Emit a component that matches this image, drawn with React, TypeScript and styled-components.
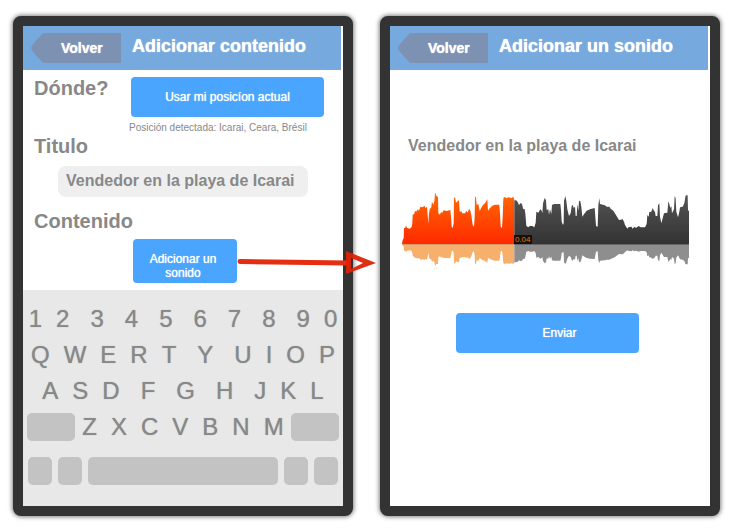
import React from "react";
import styled, { createGlobalStyle } from "styled-components";

const GlobalStyle = createGlobalStyle`
  *, *::before, *::after { box-sizing: border-box; }
  body { margin: 0; background: #fff; font-family: "Liberation Sans", Arial, sans-serif; color: #888; }
  button, input { font-family: inherit; margin: 0; border: 0; }
  button { cursor: pointer; padding: 0; }
  h1, h2, p { margin: 0; }
`;

const Board = styled.main`
  display: grid;
  grid-template-columns: 1fr 1fr;
  gap: 27px;
  padding: 16px 11px 13px 13px;
`;

const Phone = styled.section`
  display: flex;
  flex-direction: column;
  min-width: 0;
  border: 10px solid #333;
  border-radius: 8px;
  background: #333;
  box-shadow: 0 0 4px 1px rgba(0, 0, 0, 0.5);
`;

const Screen = styled.div`
  flex: 1;
  display: flex;
  flex-direction: column;
  background: #fff;
`;

const Header = styled.header`
  display: flex;
  align-items: flex-start;
  gap: 11px;
  height: 44px;
  margin-right: 2px;
  padding: 7px 8px;
  background: #76a9dd;
`;

const BackButton = styled.button`
  width: 90px;
  height: 30px;
  padding-left: 30px;
  text-align: left;
  background: #7d92b3;
  color: #fff;
  font-size: 14px;
  font-weight: bold;
  text-shadow: 0 0 1px #fff;
  clip-path: polygon(12px 0, 100% 0, 100% 100%, 12px 100%, 2px 19px, 0 50%, 2px 11px);
`;

const Title = styled.h1`
  padding-top: 1px;
  color: #fff;
  font-size: 18px;
  line-height: 24px;
  white-space: nowrap;
  text-shadow: 0 0 1px #fff;
`;

const Form = styled.form`
  flex: 1;
  display: flex;
  flex-direction: column;
  padding: 6px 19px 7px 11px;
`;

const LocationRow = styled.div`
  display: flex;
`;

const Heading = styled.h2`
  font-size: 20px;
  line-height: 24px;
`;

const LocationHeading = styled(Heading)`
  flex: 0 0 95px;
`;

const TitleLabel = styled.label`
  font-size: 20px;
  font-weight: bold;
  line-height: 24px;
`;

const LocationAction = styled.div`
  flex: 1;
  display: flex;
  flex-direction: column;
`;

const ActionButton = styled.button`
  min-height: 40px;
  border-radius: 4px;
  background: #49a5fe;
  color: #fff;
  font-size: 12px;
  line-height: 14px;
  text-shadow: 0 0 1px #fff;
`;

const LocateButton = styled(ActionButton)`
  margin: 1px 0 0 2px;
`;

const Note = styled.p`
  margin-top: 5px;
  font-size: 10px;
  line-height: 12px;
  white-space: nowrap;
`;

const TitleInput = styled.input`
  width: auto;
  min-width: 0;
  height: 31px;
  margin: 8px 16px 12px 24px;
  padding: 0 8px 2px;
  border-radius: 8px;
  background: #efefef;
  color: #888;
  font-size: 16px;
  font-weight: bold;
`;

const SoundSlot = styled.div`
  position: relative;
  align-self: center;
  width: 104px;
  margin: 6px 0 0 12px;
`;

const SoundButton = styled(ActionButton)`
  display: block;
  width: 100%;
  padding: 13px 14px 3px 10px;
`;

const FlowArrow = styled.svg`
  position: absolute;
  z-index: 1;
  top: 10px;
  left: 100%;
  pointer-events: none;
`;

const Keyboard = styled.div`
  display: flex;
  flex-direction: column;
  gap: 8px;
  padding: 15px 4px 21px;
  background: #e8e8e8;
`;

const KeyRow = styled.div`
  display: flex;
  justify-content: center;
  height: 28px;
`;

const BottomRow = styled(KeyRow)`
  gap: 6px;
  margin-top: 8px;
  padding: 0 1px;
`;

const LetterKey = styled.button<{ $wide: boolean }>`
  margin-left: ${(p) => (p.$wide ? 21 : 14)}px;
  background: none;
  color: #888;
  font-size: 24px;
  line-height: 28px;
  text-shadow: 0 0 1px #999;
  &:first-child { margin-left: 0; }
`;

const BlankKey = styled.button<{ $size: "key" | "shift" | "space" }>`
  flex: ${(p) => (p.$size === "space" ? "1" : p.$size === "shift" ? "0 0 48px" : "0 0 24px")};
  border-radius: 5px;
  background: #c3c3c3;
`;

const ShiftRow = styled(KeyRow)`
  justify-content: space-between;
`;

const LetterGroup = styled.div`
  display: flex;
`;

const SoundPanel = styled.div`
  flex: 1;
  display: flex;
  flex-direction: column;
  padding: 64px 21px 0 12px;
`;

const SoundTitle = styled.h2`
  padding-left: 6px;
  font-size: 16px;
  line-height: 24px;
`;

const Player = styled.div`
  position: relative;
  margin-top: 34px;
`;

const Wave = styled.svg`
  display: block;
  width: 100%;
  height: auto;
`;

const TimeTag = styled.span`
  position: absolute;
  left: 39%;
  top: 43px;
  padding: 0 1px;
  background: #15100c;
  color: #e8730c;
  font-size: 8px;
  line-height: 9px;
`;

const SendButton = styled(ActionButton)`
  margin: 46px 50px 0 54px;
  padding-left: 24px;
`;

/* Outline of the recording, as x,y pairs; the time axis is at y = 192. */
const AXIS = 192;
const SPLIT = 358;
const outline = [
  "21,192 23,180 26,175 27,145 31,143 33,136 36,144 44,146 50,141 52,130 53,105 58,101 60,92 64,95 68,88 72,92",
  "76,80 83,82 88,77 92,84 96,80 98,105 100,131 102,100 105,83 108,86 111,65 115,74 118,64 120,40 122,40 124,48",
  "129,50 130,100 135,104 138,95 141,100 146,91 155,93 166,90 168,110 170,140 173,144 176,130 177,52 180,53",
  "183,68 188,64 192,60 194,95 199,94 202,100 210,100 214,92 218,98 222,86 226,92 229,105 233,135 237,140",
  "239,110 240,50 243,52 245,75 250,72 254,93 258,85 264,75 270,70 277,58 279,92 285,84 292,77 300,74 313,74",
  "315,100 317,140 321,144 323,110 325,55 330,50 334,55 340,52 350,54 355,50 359,62 363,60 368,66 372,75",
  "378,68 382,75 384,86 389,88 391,100 394,138 400,142 404,138 412,138 418,142 422,128 424,95 430,98 436,88",
  "440,92 442,100 444,70 449,54 453,60 455,90 460,88 462,104 465,88 469,102 471,75 477,72 496,72 498,90",
  "500,125 504,135 506,130 507,62 511,48 514,62 517,88 522,108 527,100 530,78 533,74 536,84 540,80 542,108",
  "545,108 547,72 550,92 552,62 556,64 559,80 562,110 569,100 575,92 585,88 599,84 601,110 603,138 608,140",
  "610,75 613,54 615,72 630,76 635,80 643,80 647,86 655,92 661,102 667,112 672,120 683,118 687,125 690,135",
  "697,146 700,142 710,140 712,146 719,140 723,144 731,138 737,142 750,142 755,132 757,105 761,110 763,96",
  "769,95 773,84 777,92 780,96 782,108 787,108 789,76 793,70 795,110 799,130 803,115 807,100 817,98 820,64",
  "823,72 826,84 829,78 831,100 837,88 839,48 842,55 844,95 849,112 853,95 855,82 863,80 868,70 871,50",
  "873,46 878,46 879,90 882,94 882,192",
]
  .join(" ")
  .split(" ")
  .map((pair) => pair.split(",").map(Number));

const topPoints = outline.map(([x, y]) => `${x},${y}`).join(" ");
const echoPoints = outline
  .map(([x, y]) => `${x},${AXIS + Math.round((AXIS - y) * 0.42)}`)
  .join(" ");

function Waveform() {
  return (
    <Wave viewBox="21 36 861 225" role="img" aria-label="Forma de onda del sonido">
      <defs>
        <linearGradient id="played" gradientUnits="userSpaceOnUse" x1="0" y1="40" x2="0" y2="192">
          <stop offset="0" stopColor="#ff6a00" />
          <stop offset="1" stopColor="#ff2900" />
        </linearGradient>
        <linearGradient id="pending" gradientUnits="userSpaceOnUse" x1="0" y1="40" x2="0" y2="192">
          <stop offset="0" stopColor="#555" />
          <stop offset="1" stopColor="#333" />
        </linearGradient>
        <clipPath id="before"><rect x="21" y="0" width={SPLIT - 21} height="270" /></clipPath>
        <clipPath id="after"><rect x={SPLIT} y="0" width={882 - SPLIT} height="270" /></clipPath>
      </defs>
      <g clipPath="url(#before)">
        <polygon points={topPoints} fill="url(#played)" />
        <polygon points={echoPoints} fill="#f6b06c" />
        <rect x="23" y="192" width="340" height="3" fill="#d59a68" />
      </g>
      <g clipPath="url(#after)">
        <polygon points={topPoints} fill="url(#pending)" />
        <polygon points={echoPoints} fill="#8e8e8e" />
        <rect x="350" y="192" width="532" height="3" fill="#666" />
      </g>
    </Wave>
  );
}

/* A dot before a key marks a wide space in front of it. */
function Letters({ keys }: { keys: string }) {
  return (
    <>
      {keys.split(" ").map((k) => (
        <LetterKey key={k} type="button" $wide={k.startsWith(".")}>
          {k.replace(".", "")}
        </LetterKey>
      ))}
    </>
  );
}

function TopBar({ title }: { title: string }) {
  return (
    <Header>
      <BackButton type="button">Volver</BackButton>
      <Title>{title}</Title>
    </Header>
  );
}

export default function App() {
  return (
    <>
      <GlobalStyle />
      <Board>
        <Phone>
          <Screen>
            <TopBar title="Adicionar contenido" />
            <Form onSubmit={(e) => e.preventDefault()}>
              <LocationRow>
                <LocationHeading>Dónde?</LocationHeading>
                <LocationAction>
                  <LocateButton type="button">Usar mi posicíon actual</LocateButton>
                  <Note>Posición detectada: Icarai, Ceara, Brésil</Note>
                </LocationAction>
              </LocationRow>
              <TitleLabel htmlFor="titulo">Titulo</TitleLabel>
              <TitleInput id="titulo" type="text" defaultValue="Vendedor en la playa de Icarai" />
              <Heading>Contenido</Heading>
              <SoundSlot>
                <SoundButton type="button">Adicionar un sonido</SoundButton>
                <FlowArrow width="140" height="28" viewBox="0 0 140 28" aria-hidden="true">
                  <path d="M3 12.5 L110 14" stroke="#e52d12" strokeWidth="5" strokeLinecap="round" />
                  <path
                    d="M109 2 L139 14 L109 25 Z M114 9 V20 L126 14 Z"
                    fill="#dc2408"
                    fillOpacity="0.95"
                    fillRule="evenodd"
                  />
                </FlowArrow>
              </SoundSlot>
            </Form>
            <Keyboard>
              <KeyRow><Letters keys="1 2 .3 .4 .5 .6 .7 .8 .9 0" /></KeyRow>
              <KeyRow><Letters keys="Q W E R T .Y .U I O P" /></KeyRow>
              <KeyRow><Letters keys="A S D .F .G .H .J K L" /></KeyRow>
              <ShiftRow>
                <BlankKey type="button" $size="shift" aria-label="Mayúsculas" />
                <LetterGroup><Letters keys="Z X C V B N M" /></LetterGroup>
                <BlankKey type="button" $size="shift" aria-label="Borrar" />
              </ShiftRow>
              <BottomRow>
                <BlankKey type="button" $size="key" aria-label="Símbolos" />
                <BlankKey type="button" $size="key" aria-label="Idioma" />
                <BlankKey type="button" $size="space" aria-label="Espacio" />
                <BlankKey type="button" $size="key" aria-label="Punto" />
                <BlankKey type="button" $size="key" aria-label="Intro" />
              </BottomRow>
            </Keyboard>
          </Screen>
        </Phone>
        <Phone>
          <Screen>
            <TopBar title="Adicionar un sonido" />
            <SoundPanel>
              <SoundTitle>Vendedor en la playa de Icarai</SoundTitle>
              <Player>
                <Waveform />
                <TimeTag>0.04</TimeTag>
              </Player>
              <SendButton type="button">Enviar</SendButton>
            </SoundPanel>
          </Screen>
        </Phone>
      </Board>
    </>
  );
}
